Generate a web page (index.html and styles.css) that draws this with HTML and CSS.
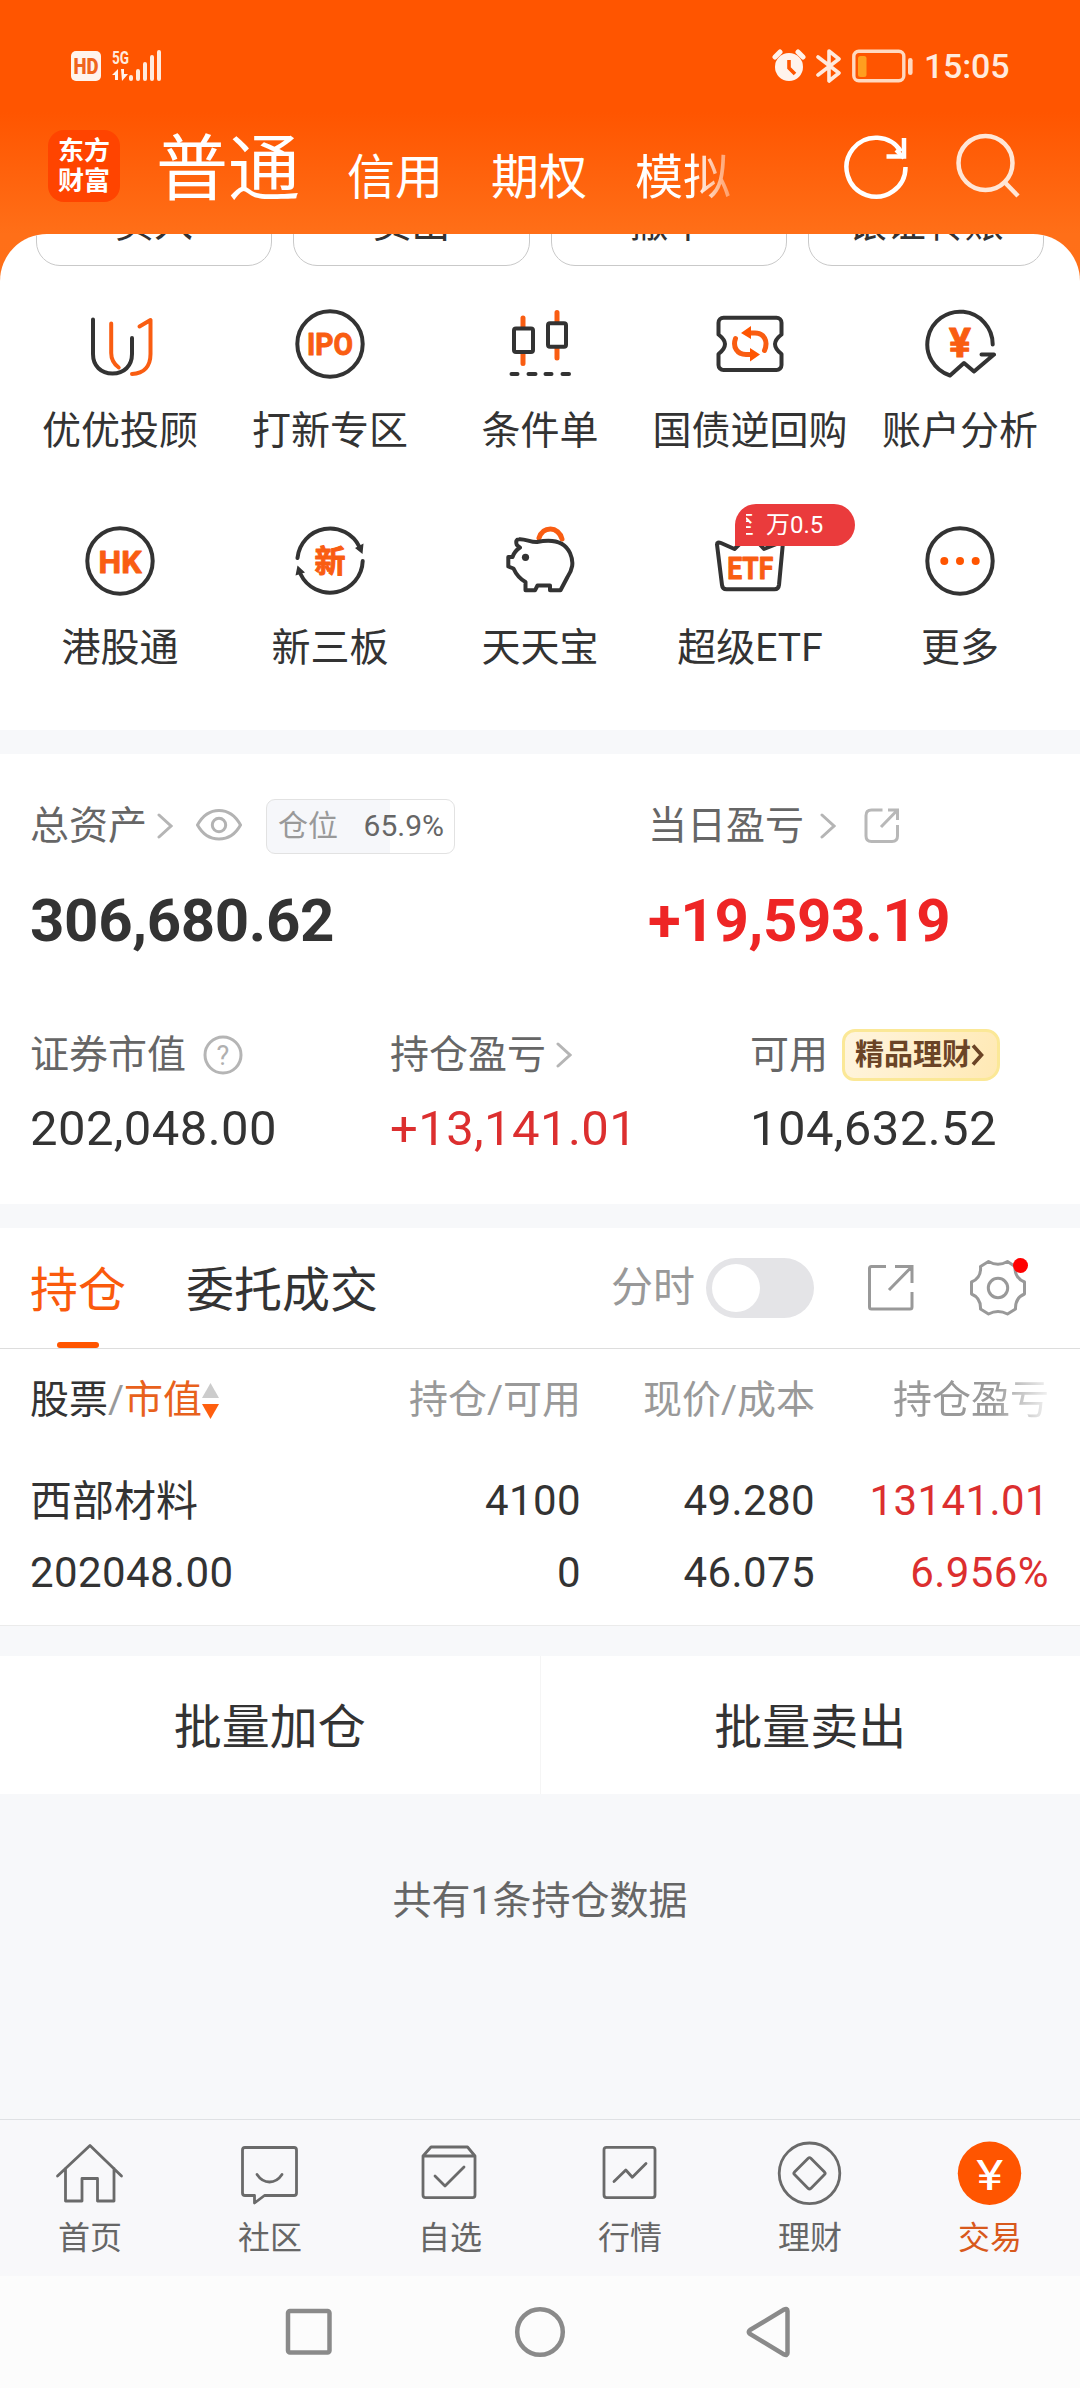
FILE: index.html
```html
<!DOCTYPE html>
<html lang="zh-CN">
<head>
<meta charset="utf-8">
<title>交易</title>
<link rel="stylesheet" href="styles.css">
</head>
<body>
<div class="hero">
  <div class="status">
    <svg class="status-left" width="92" height="34" viewBox="0 0 92 34">
      <rect x="0" y="2" width="30" height="30" rx="5" fill="#fff3ec"/>
      <text x="15" y="24.500" class="hd" text-anchor="middle" textLength="25" lengthAdjust="spacingAndGlyphs">HD</text>
      <text x="41" y="15" class="g5" textLength="17" lengthAdjust="spacingAndGlyphs">5G</text>
      <path d="M41 26l6-6v11h-3v-5zM50 20h3v5h4l-6 7z" fill="#fff3ec"/>
      <path d="M60 28v2M67 22v8M74 15v15M81 8v22M88 3v27" stroke="#ffeadd" stroke-width="4" stroke-linecap="round"/>
    </svg>
    <div class="status-right">
      <svg width="34" height="34" viewBox="0 0 34 34">
        <circle cx="17" cy="18" r="14" fill="#fff3ec"/>
        <path d="M3 8l5-5M31 8l-5-5" stroke="#fff3ec" stroke-width="5" stroke-linecap="round"/>
        <path d="M17 11v8l6 6" fill="none" stroke="#ff5500" stroke-width="3.6"/>
      </svg>
      <svg width="26" height="34" viewBox="0 0 26 34">
        <path d="M2 8l21 16-10 8V2l10 8L2 26" fill="none" stroke="#ffeadd" stroke-width="3.6" stroke-linejoin="round" stroke-linecap="round"/>
      </svg>
      <svg width="62" height="34" viewBox="0 0 62 34">
        <rect x="1.8" y="2.3" width="50" height="29.5" rx="5" fill="none" stroke="#ffd9c0" stroke-width="3.4"/>
        <rect x="6" y="7" width="8.5" height="21" rx="2.5" fill="#ff9f1f"/>
        <rect x="56" y="9" width="4.6" height="17" rx="2.3" fill="#ffd9c0"/>
      </svg>
      <span class="clock">15:05</span>
    </div>
  </div>
  <div class="header">
    <div class="logo"><span>东方</span><span>财富</span></div>
    <div class="modes">
      <span class="mode mode-on">普通</span>
      <span class="mode">信用</span>
      <span class="mode">期权</span>
      <span class="mode mode-fade">模拟</span>
    </div>
    <svg class="refresh" width="72" height="72" viewBox="0 0 72 72">
      <path d="M64.5 37A29.5 29.5 0 1 1 60 21.500" fill="none" stroke="#fff" stroke-width="4.5"/>
      <path d="M63 8v18.500H45.500" fill="none" stroke="#fff" stroke-width="4.5"/>
      <path d="M55 20l8 8" fill="none" stroke="#fff" stroke-width="4"/>
    </svg>
    <svg width="72" height="72" viewBox="0 0 72 72">
      <circle cx="34.500" cy="33" r="27" fill="none" stroke="#ffe6d6" stroke-width="4.500"/>
      <path d="M53 51.500l14 14.500" stroke="#ffe6d6" stroke-width="4.500"/>
    </svg>
  </div>
  <div class="panel">
    <div class="pills">
      <div class="pill">买入</div><div class="pill">卖出</div><div class="pill">撤单</div><div class="pill">银证转账</div>
    </div>
    <div class="funcs">
      <div class="func">
        <svg class="ic" viewBox="0 0 72 72">
          <path d="M9 11.500V46C9 58 17 65.500 28.500 65.500S48 58 48 46V30"/>
          <path class="o" d="M27.200 15.500V45q0 9 7.500 14.500M55.500 18.500L66.500 12V46C66.500 58 60 65.500 48 66"/>
        </svg><span>优优投顾</span></div>
      <div class="func">
        <svg class="ic" viewBox="0 0 72 72"><circle cx="36" cy="36" r="32.700"/>
          <text class="t" x="36" y="47" font-size="32" text-anchor="middle" textLength="46" lengthAdjust="spacingAndGlyphs">IPO</text></svg>
        <span>打新专区</span></div>
      <div class="func">
        <svg class="ic" viewBox="0 0 72 72">
          <path class="o w" d="M19 10v9M19 45v10.500M53 4.500v9M53 40v10"/>
          <rect x="10" y="20.500" width="19" height="23.500" rx="2"/><rect x="44" y="15.300" width="18" height="23.500" rx="2"/>
          <path d="M7.500 66h6M24.500 66h7M41.500 66h6M58.500 66h6.500"/>
        </svg><span>条件单</span></div>
      <div class="func">
        <svg class="ic" viewBox="0 0 72 72">
          <path d="M9.500 9.700H62.500a5 5 0 0 1 5 5V26.500C63 30 61 33 61 36s2 6.500 6.500 10V57a5 5 0 0 1-5 5H9.500a5 5 0 0 1-5-5V46c4.500-3.500 6.500-7 6.500-10S9 30 4.500 26.500V14.700a5 5 0 0 1 5-5z"/>
          <path class="o w" d="M50.500 42.500C54.500 33 50 25 41 25H36M21.500 30.500C18.500 39 23 46.500 32 46.500H37"/>
          <path class="of" d="M27 25l10-7v13zM46 46.500l-10-6.500v13.500z"/>
        </svg><span>国债逆回购</span></div>
      <div class="func">
        <svg class="ic" viewBox="0 0 72 72">
          <path d="M68.700 36.500A32.700 32.700 0 1 0 26 67.500L40 55l10 8.500L70 46.500H57.500"/>
          <text class="t" x="36" y="48.500" font-size="41" text-anchor="middle">¥</text>
        </svg><span>账户分析</span></div>
      <div class="func">
        <svg class="ic" viewBox="0 0 72 72"><circle cx="36" cy="36" r="32.700"/>
          <text class="t" x="36" y="47.500" font-size="32" text-anchor="middle" textLength="43" lengthAdjust="spacingAndGlyphs">HK</text></svg>
        <span>港股通</span></div>
      <div class="func">
        <svg class="ic" viewBox="0 0 72 72">
          <path d="M3.500 33A32.700 32.700 0 0 1 65.500 22M68.700 36A32.700 32.700 0 0 1 6.500 49"/>
          <path class="df" d="M68.500 29l-7.500-6 8.500-4.500zM3.500 40.500l7.500 7-9.500 3z"/>
          <text class="t cjk" x="36" y="47" font-size="31" text-anchor="middle">新</text>
        </svg><span>新三板</span></div>
      <div class="func">
        <svg class="ic" viewBox="0 0 72 72">
          <path class="o w" d="M35 13C37 7 41.500 4 46.500 4S56.500 8 58 14"/>
          <path d="M12.800 20Q11 14.500 15 14.200C21 13.500 27 17.500 33 17C50 13.500 61 17.500 66 28C70.500 38 68 45 63.500 52L56.500 65.200H46V60.500H33.500L31 65.300H21.500V57Q13.500 52.500 9.500 43.500L4.300 41.500V32H8.500Q10.500 26 16 22.500z"/>
          <circle cx="21.500" cy="32.300" r="3.600" class="df"/>
        </svg><span>天天宝</span></div>
      <div class="func">
        <svg class="ic" viewBox="0 0 72 72">
          <path d="M3 19.500Q3 16.500 7 18L20.500 24L36 9L50 24L64 18.500Q69 17 68.700 20.500L65 60Q64.500 64.300 60.500 64.300H12.500Q8.500 64.300 8 60z"/>
          <text class="t" x="36.200" y="53.500" font-size="32" text-anchor="middle" textLength="46" lengthAdjust="spacingAndGlyphs">ETF</text>
        </svg><span>超级ETF</span>
        <div class="promo"><i>至</i><b>万0.5</b></div></div>
      <div class="func">
        <svg class="ic" viewBox="0 0 72 72"><circle cx="36" cy="36" r="32.700"/>
          <g class="of"><circle cx="20.300" cy="36" r="4"/><circle cx="36" cy="36" r="4"/><circle cx="51.700" cy="36" r="4"/></g></svg>
        <span>更多</span></div>
    </div>
  </div>
</div>

<section class="assets">
  <div class="row totals-label">
    <div class="cell wide"><span>总资产</span>
      <svg class="chev c1" width="16" height="28" viewBox="0 0 16 28"><path d="M2 3l12 11L2 25"/></svg>
      <svg class="eye" width="46" height="34" viewBox="0 0 46 34"><path d="M1.500 17C7 7 14 2.500 23 2.500S39 7 44.500 17C39 27 32 31 23 31S7 27 1.500 17z"/><circle cx="23" cy="17" r="6.700"/></svg>
      <div class="ratio"><span>仓位</span><b>65.9%</b></div>
    </div>
    <div class="cell"><span>当日盈亏</span>
      <svg class="chev c2" width="16" height="28" viewBox="0 0 16 28"><path d="M2 3l12 11L2 25"/></svg>
      <svg class="share-s" width="36" height="36" viewBox="0 0 36 36"><path d="M18.500 2H7.500Q2 2 2 7.500V28Q2 33.500 7.500 33.500H28Q33.500 33.500 33.500 28V17M24 2H33.500V12M33 2.500L17 19"/></svg>
    </div>
  </div>
  <div class="row totals">
    <div class="cell wide">306,680.62</div><div class="cell up">+19,593.19</div>
  </div>
  <div class="row trio trio-label">
    <div class="cell"><span>证券市值</span>
      <svg class="help" width="40" height="40" viewBox="0 0 40 40"><circle cx="20" cy="20" r="18"/><text x="20" y="29.500" text-anchor="middle">?</text></svg></div>
    <div class="cell"><span>持仓盈亏</span><svg class="chev c3" width="16" height="28" viewBox="0 0 16 28"><path d="M2 3l12 11L2 25"/></svg></div>
    <div class="cell"><span>可用</span>
      <div class="gold"><span>精品理财</span><svg width="14" height="24" viewBox="0 0 14 24"><path d="M2 2.500l8.500 9.500L2 21.500" fill="none" stroke="#6b4426" stroke-width="3.600"/></svg></div></div>
  </div>
  <div class="row trio trio-value">
    <div class="cell">202,048.00</div><div class="cell up">+13,141.01</div><div class="cell">104,632.52</div>
  </div>
</section>

<section class="positions">
  <div class="tabs">
    <span class="tab tab-on">持仓</span><span class="tab">委托成交</span>
    <span class="intraday">分时</span>
    <div class="switch"></div>
    <svg class="share" width="48" height="48" viewBox="0 0 48 48"><path d="M19 2.500H4.500Q2.500 2.500 2.500 4.500V43Q2.500 45 4.500 45H43Q45 45 45 43V28M28 2.500H45V19M44.500 3L22 26"/></svg>
    <div class="gear">
      <svg width="60" height="60" viewBox="0 0 60 60"><path d="M20.500 3.500Q30 9 39.500 3.500L47 8.500Q46.500 20 56.500 24V36Q47 40 47.500 51L39.500 56Q30 51 20.500 56L12.500 51Q13 40 3.500 36V24Q13.500 20 12.500 8.500z"/><circle cx="30" cy="30" r="9.700"/></svg>
      <i class="dot"></i>
    </div>
  </div>
  <div class="grid thead">
    <div class="first"><em>股票</em>/<strong>市值</strong>
      <svg width="17" height="36" viewBox="0 0 17 36"><path d="M8.500 0L17 15H0z" fill="#ccc"/><path d="M8.500 36L17 21H0z" fill="#ff5f0f"/></svg></div>
    <div>持仓/可用</div><div>现价/成本</div><div class="fade">持仓盈亏</div>
  </div>
  <div class="grid trow"><div class="first name">西部材料</div><div>4100</div><div>49.280</div><div class="up">13141.01</div></div>
  <div class="grid trow"><div class="first">202048.00</div><div>0</div><div>46.075</div><div class="up">6.956%</div></div>
</section>

<section class="batch"><div>批量加仓</div><div>批量卖出</div></section>
<p class="summary">共有1条持仓数据</p>

<nav class="tabbar">
  <div><svg class="ti" viewBox="0 0 72 72"><path d="M3.500 39L36 8.500L67.500 39M11.500 31.500V64H28V41.500H43.500V64H60V31.500"/></svg><span>首页</span></div>
  <div><svg class="ti" viewBox="0 0 72 72"><path d="M11 10.500H60Q62.500 10.500 62.500 13V56Q62.500 58.500 60 58.500H30.500L20.500 66V58.500H11Q8.500 58.500 8.500 56V13Q8.500 10.500 11 10.500z"/><path d="M23 37.500Q28 45 35.500 45T48 37.500"/></svg><span>社区</span></div>
  <div><svg class="ti" viewBox="0 0 72 72"><path d="M9 19L17 10H53.500L61 19M9 19H61V58Q61 60.700 58.500 60.700H11.500Q9 60.700 9 58zM21 39l10 10L50 30"/></svg><span>自选</span></div>
  <div><svg class="ti" viewBox="0 0 72 72"><rect x="10" y="10.300" width="51" height="50.300" rx="2.500"/><path d="M20 44.500L31.800 33l6.500 7.300L52 26.500"/></svg><span>行情</span></div>
  <div><svg class="ti" viewBox="0 0 72 72"><circle cx="35.500" cy="36.300" r="30.300"/><path d="M34.200 21.200Q35.500 20 36.800 21.200L50.500 35Q51.800 36.300 50.500 37.600L36.800 51.400Q35.500 52.600 34.200 51.400L20.500 37.600Q19.200 36.300 20.500 35z"/></svg><span>理财</span></div>
  <div class="on"><svg class="ti" viewBox="0 0 72 72"><circle cx="35.500" cy="36.300" r="31.700" class="disc"/><text x="35.700" y="52.500" text-anchor="middle" textLength="27" lengthAdjust="spacingAndGlyphs">¥</text></svg><span>交易</span></div>
</nav>
<div class="sysnav">
  <svg width="60" height="60" viewBox="0 0 60 60"><rect x="9" y="9" width="41.500" height="41.500" rx="2"/></svg>
  <svg width="60" height="60" viewBox="0 0 60 60"><circle cx="30" cy="30" r="22.800"/></svg>
  <svg width="60" height="60" viewBox="0 0 60 60"><path d="M9 28L43 7.600Q46.500 6 46.500 9V51Q46.500 54 43 52.400L9 32Q6.500 30 9 28z"/></svg>
</div>
</body>
</html>
```
FILE: styles.css
```css
* { box-sizing: border-box; }
body {
  margin: 0;
  width: 1080px;
  height: 2388px;
  overflow: hidden;
  display: flex;
  flex-direction: column;
  background: #f7f8fa;
  color: #333;
  font-family: Roboto, "Noto Sans CJK SC", sans-serif;
  font-size: 39px;
}
svg { display: block; flex: none; }
i, em { font-style: normal; }
b, strong { font-weight: 400; }

/* Orange top area */
.hero {
  height: 730px;
  flex: none;
  background: linear-gradient(#ff5500 0, #ff5500 112px, #ff6f18 234px, #ff7018 300px);
}
.status {
  height: 130px;
  padding: 49px 72px 0 71px;
  display: flex;
  justify-content: space-between;
}
.status-right { display: flex; gap: 10px; height: 34px; align-items: center; }
.hd { font: 900 22px Roboto, sans-serif; fill: #f0641c; }
.g5 { font: 700 19px Roboto, sans-serif; fill: #ffeadd; }
.clock { font-size: 34px; font-weight: 500; line-height: 34px; color: #ffeadd; width: 84px; letter-spacing: -.2px; }
.header { height: 104px; padding: 0 57px 0 48px; display: flex; align-items: flex-start; }
.logo {
  width: 72px; height: 72px; border-radius: 16px; background: #ff4400; color: #fff;
  display: flex; flex-direction: column; align-items: center; justify-content: center;
  font-size: 26px; font-weight: 700; line-height: 30px;
}
.modes { display: flex; align-items: baseline; margin-left: 37px; width: 684px; color: #fff; gap: 48px; line-height: 80px; }
.mode { font-size: 48px; }
.mode-on { font-size: 72px; margin: 0 -1px 0 -1px; }
.mode-fade { -webkit-mask-image: linear-gradient(90deg, #000 60%, rgba(0,0,0,.35) 100%); mask-image: linear-gradient(90deg, #000 60%, rgba(0,0,0,.35) 100%); }
.refresh { margin-right: 38px; }

.panel { height: 496px; background: #fff; border-radius: 47px 47px 0 0; overflow: hidden; }
.pills { display: flex; gap: 21px; padding: 0 36px; margin-top: -55px; }
.pill {
  flex: 1; height: 87px; border: 1px solid #c9c9c9; border-radius: 24px;
  text-align: center; line-height: 88px;
}
.funcs { display: grid; grid-template-columns: repeat(5, 210px); padding: 42px 15px 0; grid-auto-rows: 217px; }
.func { position: relative; display: flex; flex-direction: column; align-items: center; white-space: nowrap; }
.func span { margin-top: 26px; line-height: 50px; }
.ic { width: 72px; height: 72px; fill: none; stroke: #333; stroke-width: 4; stroke-linecap: round; stroke-linejoin: round; }
.ic .o { stroke: #f95d12; }
.ic .w { stroke-width: 5; }
.ic .of { fill: #ff5500; stroke: none; }
.ic .df { fill: #333; stroke: none; }
.ic .t { fill: #f95d12; stroke: #f95d12; stroke-width: 1; font-family: Roboto, sans-serif; font-weight: 700; }
.ic .cjk { font-family: "Noto Sans CJK SC", sans-serif; }
.promo {
  position: absolute; left: 90px; top: -21px; width: 120px; height: 42px;
  border-radius: 21px 21px 21px 0; background: #ea3b3c; color: #fff;
  display: flex; align-items: center; padding-left: 11px; font-size: 24px; line-height: 42px;
}
.promo i { width: 8px; height: 42px; overflow: hidden; display: flex; justify-content: flex-end; margin-right: 12px; }

/* Account totals */
.assets { margin-top: 24px; height: 450px; flex: none; background: #fff; padding: 44px 30px 0; color: #666; }
.row { display: flex; }
.cell { display: flex; align-items: center; white-space: nowrap; flex: none; }
.cell > span { line-height: 52px; }
.wide { width: 618px; }
.totals-label { height: 56px; }
.totals { margin-top: 30px; height: 72px; font-size: 60px; font-weight: 700; color: #333; letter-spacing: -.35px; }
.up { color: #dc2f2f; }
.totals .up { color: #ee2525; }
.trio .cell { width: 360px; }
.trio-label { margin-top: 73px; height: 52px; }
.trio-value { margin-top: 17px; height: 60px; font-size: 49px; color: #333; letter-spacing: .4px; }
.trio-value .up { color: #dc2f2f; }
.chev { fill: none; stroke: #b5b5b5; stroke-width: 3; stroke-linecap: round; }
.c1 { margin-left: 10px; }
.c2 { margin-left: 16px; }
.c3 { margin-left: 10px; }
.eye { margin-left: 23px; fill: none; stroke: #b3b3b3; stroke-width: 3; position: relative; top: -1px; }
.ratio {
  margin-left: 24px; width: 189px; height: 55px; border: 1px solid #e2e2e2; border-radius: 9px;
  background: linear-gradient(90deg, #f6f7fa 66%, #fff 66%);
  display: flex; justify-content: space-between; align-items: center; padding: 0 10px 0 11px; font-size: 30px; line-height: 52px; color: #999;
}
.ratio b { color: #666; }
.share-s { margin-left: 28px; fill: none; stroke: #b8b8b8; stroke-width: 3; }
.help { margin-left: 17px; fill: none; stroke: #b5b5b5; stroke-width: 3; }
.help text { font-size: 27px; fill: #b0b0b0; stroke: none; }
.gold {
  margin-left: 14px; width: 158px; height: 52px; border: 3px solid #fbe897; border-radius: 13px 14px 16px 12px;
  background: linear-gradient(110deg, #fff5df, #ffe9b4); color: #6b4426;
  display: flex; align-items: center; padding-left: 10px; font-size: 29px; line-height: 46px; font-weight: 700;
}

/* Positions */
.positions { margin-top: 24px; height: 398px; flex: none; background: #fff; border-bottom: 1px solid #ebebeb; }
.tabs { height: 121px; border-bottom: 1px solid #ddd; padding: 0 48px 0 30px; display: flex; align-items: center; }
.tab { font-size: 48px; height: 120px; line-height: 126px; margin-right: 60px; }
.tab-on { position: relative; color: #fa5a0c; }
.tab-on::after { content: ""; position: absolute; left: 27px; bottom: 0; width: 42px; height: 6px; border-radius: 3px; background: #ff5500; }
.intraday { margin-left: 173px; font-size: 42px; line-height: 60px; color: #999; }
.switch { margin-left: 11px; width: 108px; height: 60px; border-radius: 30px; background: #e4e4e7; padding: 6px; }
.switch::before { content: ""; display: block; width: 48px; height: 48px; border-radius: 50%; background: #fff; }
.share { margin-left: 53px; fill: none; stroke: #999; stroke-width: 3; }
.gear { position: relative; margin-left: 53px; fill: none; stroke: #999; stroke-width: 3; stroke-linejoin: round; }
.dot { position: absolute; left: 45px; top: 0; width: 15px; height: 15px; border-radius: 50%; background: #f00; }
.grid { display: grid; grid-template-columns: 300px 251px 234px 234px; padding: 0 30px; text-align: right; white-space: nowrap; }
.first { text-align: left; }
.thead { height: 101px; line-height: 103px; color: #999; }
.thead .first { display: flex; align-items: center; }
.thead em { color: #333; }
.thead strong { color: #e8611c; }
.fade { -webkit-mask-image: linear-gradient(90deg, #000 76%, rgba(0,0,0,.12) 100%); mask-image: linear-gradient(90deg, #000 76%, rgba(0,0,0,.12) 100%); }
.trow { height: 72px; line-height: 72px; font-size: 42px; letter-spacing: .4px; }
.thead + .trow { margin-top: 15px; }
.name { letter-spacing: 0; line-height: 74px; }

.batch { margin-top: 30px; height: 138px; flex: none; background: #fff; display: flex; font-size: 48px; text-align: center; line-height: 143px; }
.batch div { flex: 1; height: 138px; }
.batch div + div { border-left: 1px solid #f5f5f5; }
.summary { margin: 0; height: 325px; flex: none; text-align: center; color: #666; line-height: 214px; }

/* Bottom bars */
.tabbar { height: 157px; flex: none; border-top: 1px solid #dfe1e4; background: #f8f8fa; display: grid; grid-template-columns: repeat(6, 180px); font-size: 32px; color: #666; }
.tabbar div { display: flex; flex-direction: column; align-items: center; padding-top: 17px; }
.tabbar span { line-height: 40px; margin-top: 9px; }
.ti { width: 72px; height: 72px; fill: none; stroke: #6a6a6a; stroke-width: 2.8; stroke-linecap: round; stroke-linejoin: round; }
.ti .disc { fill: #ff5500; stroke: none; }
.ti text { fill: #fff; stroke: none; font-size: 43px; font-weight: 400; }
.tabbar .on { color: #d8591c; }
.sysnav { height: 112px; flex: none; background: #fcfcfc; display: flex; justify-content: center; align-items: center; gap: 171px; }
.sysnav svg { fill: none; stroke: #8a8a8a; stroke-width: 4.5; }
```
